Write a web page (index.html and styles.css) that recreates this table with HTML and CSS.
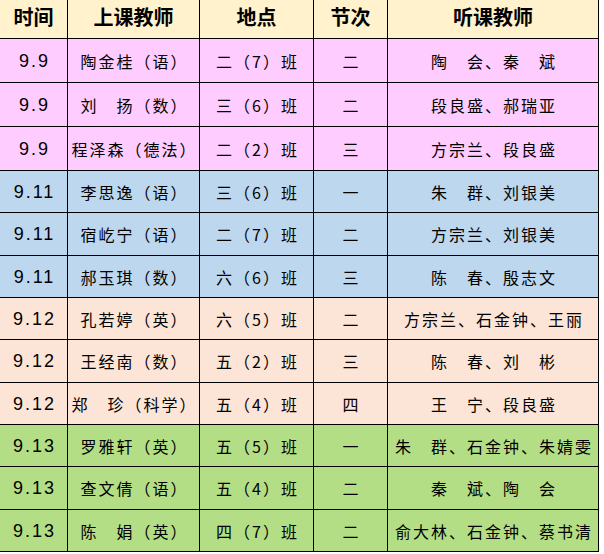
FILE: index.html
```html
<!DOCTYPE html>
<html lang="zh">
<head>
<meta charset="utf-8">
<link rel="stylesheet" href="styles.css">
</head>
<body>
<div class="table">
  <div class="row head">
    <div class="cell">时间</div>
    <div class="cell">上课教师</div>
    <div class="cell">地点</div>
    <div class="cell">节次</div>
    <div class="cell">听课教师</div>
  </div>

  <div class="row pink h44">
    <div class="cell date">9.9</div>
    <div class="cell">陶金桂（语）</div>
    <div class="cell">二（7）班</div>
    <div class="cell">二</div>
    <div class="cell">陶　会、秦　斌</div>
  </div>
  <div class="row pink h44">
    <div class="cell date">9.9</div>
    <div class="cell">刘　扬（数）</div>
    <div class="cell">三（6）班</div>
    <div class="cell">二</div>
    <div class="cell">段良盛、郝瑞亚</div>
  </div>
  <div class="row pink h44">
    <div class="cell date">9.9</div>
    <div class="cell">程泽森（德法）</div>
    <div class="cell">二（2）班</div>
    <div class="cell">三</div>
    <div class="cell">方宗兰、段良盛</div>
  </div>

  <div class="row blue h42">
    <div class="cell date">9.11</div>
    <div class="cell">李思逸（语）</div>
    <div class="cell">三（6）班</div>
    <div class="cell">一</div>
    <div class="cell">朱　群、刘银美</div>
  </div>
  <div class="row blue h43">
    <div class="cell date">9.11</div>
    <div class="cell">宿屹宁（语）</div>
    <div class="cell">二（7）班</div>
    <div class="cell">二</div>
    <div class="cell">方宗兰、刘银美</div>
  </div>
  <div class="row blue h42">
    <div class="cell date">9.11</div>
    <div class="cell">郝玉琪（数）</div>
    <div class="cell">六（6）班</div>
    <div class="cell">三</div>
    <div class="cell">陈　春、殷志文</div>
  </div>

  <div class="row peach h42">
    <div class="cell date">9.12</div>
    <div class="cell">孔若婷（英）</div>
    <div class="cell">六（5）班</div>
    <div class="cell">二</div>
    <div class="cell">方宗兰、石金钟、王丽</div>
  </div>
  <div class="row peach h43">
    <div class="cell date">9.12</div>
    <div class="cell">王经南（数）</div>
    <div class="cell">五（2）班</div>
    <div class="cell">三</div>
    <div class="cell">陈　春、刘　彬</div>
  </div>
  <div class="row peach h42">
    <div class="cell date">9.12</div>
    <div class="cell">郑　珍（科学）</div>
    <div class="cell">五（4）班</div>
    <div class="cell">四</div>
    <div class="cell">王　宁、段良盛</div>
  </div>

  <div class="row green h42">
    <div class="cell date">9.13</div>
    <div class="cell">罗雅轩（英）</div>
    <div class="cell">五（5）班</div>
    <div class="cell">一</div>
    <div class="cell">朱　群、石金钟、朱婧雯</div>
  </div>
  <div class="row green h43">
    <div class="cell date">9.13</div>
    <div class="cell">查文倩（语）</div>
    <div class="cell">五（4）班</div>
    <div class="cell">二</div>
    <div class="cell">秦　斌、陶　会</div>
  </div>
  <div class="row green h42">
    <div class="cell date">9.13</div>
    <div class="cell">陈　娟（英）</div>
    <div class="cell">四（7）班</div>
    <div class="cell">二</div>
    <div class="cell">俞大林、石金钟、蔡书清</div>
  </div>
</div>
</body>
</html>
```

FILE: styles.css
```css
html, body {
  margin: 0;
  padding: 0;
  background: #ffffff;
}

.table {
  display: flex;
  flex-direction: column;
  width: 599px;
  font-family: "Noto Sans CJK SC", sans-serif;
  color: #000;
}

.row {
  display: grid;
  grid-template-columns: 68px 132px 114px 74px 211px;
}

.head { height: 39px; background: #fff2cc; }
.h44 { height: 44px; }
.h43 { height: 43px; }
.h42 { height: 42px; }

.pink { background: #ffccff; }
.blue { background: #bdd7ee; }
.peach { background: #fce4d6; }
.green { background: #b4de86; }

.cell {
  box-sizing: border-box;
  border-right: 1px solid #000;
  border-bottom: 1px solid #000;
  display: flex;
  align-items: center;
  justify-content: center;
  white-space: nowrap;
  font-size: 16px;
  letter-spacing: 2px;
  text-indent: 2px;
  line-height: 1;
}

.head .cell {
  font-size: 20px;
  font-weight: 700;
  letter-spacing: 0;
  text-indent: 0;
  padding-bottom: 4px;
}

.date {
  font-family: "Liberation Sans", Arial, sans-serif;
  font-size: 18px;
  letter-spacing: 2px;
  text-indent: 2px;
}
```
